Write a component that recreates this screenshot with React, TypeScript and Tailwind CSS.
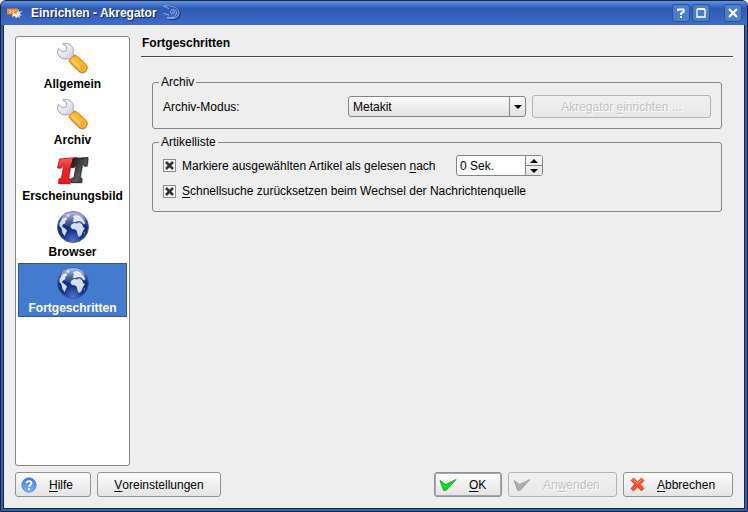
import { useState, type ReactNode } from "react";

function Wrench() {
  return (
    <svg viewBox="0 0 32 32" className="h-8 w-8" aria-hidden="true">
      <defs>
        <linearGradient id="wr-steel" x1="0" y1="0" x2="1" y2="1">
          <stop offset="0" stopColor="#ffffff" />
          <stop offset="0.5" stopColor="#e6e8f0" />
          <stop offset="1" stopColor="#b8bccb" />
        </linearGradient>
        <linearGradient id="wr-grip" x1="0" y1="1" x2="1" y2="0">
          <stop offset="0" stopColor="#f59300" />
          <stop offset="0.5" stopColor="#ffbb33" />
          <stop offset="1" stopColor="#f79d0c" />
        </linearGradient>
      </defs>
      <path d="M13 20L22 29.500q5 3 8-1l.5-4L19 13z" fill="#000" opacity="0.2" />
      <path
        d="M5.800 .8L9.600 3.400L9.200 7.600L6 8.800L1.200 5.400C0 8.800.8 12.800 4.200 14.800C6.800 16.400 9.400 16.200 11.400 15.400L13.800 17.800L18.500 13.600L16 10.800C17.200 7.200 16 3.600 12.800 1.600C10.600.2 8 .1 5.800 .8Z"
        fill="url(#wr-steel)"
        stroke="#9397ab"
        strokeWidth="0.900"
        strokeLinejoin="round"
      />
      <path
        d="M12 18.600C12 16 16.500 12 19 12.400L28.800 21.200C31 23.600 30.400 26.800 28.200 28.400C26.200 29.900 23.400 29.800 21.600 28Z"
        fill="url(#wr-grip)"
        stroke="#c97300"
        strokeWidth="1"
        strokeLinejoin="round"
      />
      <path d="M15.500 17.600L23 24.800" stroke="#ffd777" strokeWidth="1.800" />
      <circle cx="25.500" cy="24.800" r="1.400" fill="#ffe6ad" stroke="#c87600" strokeWidth="0.700" />
    </svg>
  );
}

function Letters() {
  return (
    <svg viewBox="0 0 32 32" className="h-8 w-8" aria-hidden="true">
      <defs>
        <linearGradient id="tt-red" x1="0" y1="0" x2="0" y2="1">
          <stop offset="0" stopColor="#ff6464" />
          <stop offset="0.4" stopColor="#f02424" />
          <stop offset="1" stopColor="#f01818" />
        </linearGradient>
        <linearGradient id="tt-dark" x1="0" y1="0" x2="1" y2="1">
          <stop offset="0" stopColor="#111" />
          <stop offset="0.6" stopColor="#5a5a5a" />
          <stop offset="1" stopColor="#111" />
        </linearGradient>
      </defs>
      <g strokeLinejoin="round">
        <path d="M2.500 4L20 2.500L19 11H15.500L15 8.500H14L11.500 23L13.500 24L13 28.500H1.500L2 24L4.500 23L7 9H6L4 13H.5Z" transform="translate(1 1)" fill="#777" opacity="0.45" />
        <path d="M2.500 4L20 2.500L19 11H15.500L15 8.500H14L11.500 23L13.500 24L13 28.500H1.500L2 24L4.500 23L7 9H6L4 13H.5Z" fill="url(#tt-red)" stroke="#b40a0a" strokeWidth="0.800" />
        <path d="M16 3.500L31 2.500L30 11H27L26.500 8.500H25.500L23 22.500L25 23.500L24.500 27.500H14L14.500 23.500L17 22.500L19.500 8.500H18.500L17 12.500H14Z" transform="translate(1 1)" fill="#666" opacity="0.45" />
        <path d="M16 3.500L31 2.500L30 11H27L26.500 8.500H25.500L23 22.500L25 23.500L24.500 27.500H14L14.500 23.500L17 22.500L19.500 8.500H18.500L17 12.500H14Z" fill="url(#tt-dark)" stroke="#1a1a1a" strokeWidth="0.800" />
      </g>
    </svg>
  );
}

function Globe() {
  return (
    <svg viewBox="0 0 32 32" className="h-8 w-8" aria-hidden="true">
      <defs>
        <radialGradient id="gl-sea" cx="0.5" cy="0.95" r="0.95">
          <stop offset="0" stopColor="#5276cc" />
          <stop offset="0.35" stopColor="#16358a" />
          <stop offset="0.65" stopColor="#102c7c" />
          <stop offset="1" stopColor="#6680be" />
        </radialGradient>
        <linearGradient id="gl-shine" x1="0" y1="0" x2="0" y2="1">
          <stop offset="0" stopColor="#fff" stopOpacity="0.5" />
          <stop offset="1" stopColor="#fff" stopOpacity="0.1" />
        </linearGradient>
      </defs>
      <circle cx="16" cy="16" r="15.500" fill="url(#gl-sea)" stroke="#3c57a0" strokeWidth="0.800" />
      <g fill="#d3dcf0">
        <path d="M2.500 12L5 8L8.500 6L10.500 8L8 10L8.500 12L6 13.500L5 15.500L7.500 17L10 19.500L9 22L7.500 25L5.500 22L4.500 17.500L2.500 15Z" />
        <path d="M14 14L17 12L20 12.500L22 11.500L25 13L26.500 16.500L28 17L26 20L24.500 24L22 26L20.500 23.500L20 20.500L18.500 18.500L15 18L13.500 16Z" />
        <path d="M15.500 10.500L17 8L16 5.500L19 4L23 5L26 8.500L28.500 12L27 13.500L24.500 10.500L21 10L18 11Z" />
        <path d="M9.500 4L12.500 3L12 5.500L10 6Z" />
        <path d="M27 22L28 20.500L27.500 23.500Z" />
      </g>
      <ellipse cx="16" cy="8.500" rx="12" ry="7.500" fill="url(#gl-shine)" />
    </svg>
  );
}

function Tick({ muted = false }: { muted?: boolean }) {
  return (
    <svg viewBox="0 0 18 14" className="h-[14px] w-[18px] shrink-0" aria-hidden="true">
      <path
        d="M1 2.500L4 4.500L6.500 6.500L17 1.500L7 12.500L4.500 12.200Z"
        fill={muted ? "#adadad" : "#10dc20"}
        stroke={muted ? "#9f9f9f" : "#0a9a14"}
        strokeWidth="0.800"
        strokeLinejoin="round"
      />
    </svg>
  );
}

function Cross() {
  return (
    <svg viewBox="0 0 15 15" className="h-[15px] w-[15px] shrink-0" aria-hidden="true">
      <path
        d="M3.500 1L7.500 4.800L11.500 1L14 3.500L10.200 7.300L14 11.500L11.500 14L7.500 10L3.500 14L1 11.500L4.800 7.300L1 3.500Z"
        fill="#f5532c"
        stroke="#d8381a"
        strokeWidth="0.800"
        strokeLinejoin="round"
      />
      <path d="M3.500 2.500L7.500 6.400L11.500 2.500" fill="none" stroke="#ff9c7c" strokeWidth="1" />
    </svg>
  );
}

function HelpIcon() {
  return (
    <svg viewBox="0 0 16 16" className="h-4 w-4 shrink-0" aria-hidden="true">
      <defs>
        <linearGradient id="help-ball" x1="0" y1="0" x2="0" y2="1">
          <stop offset="0" stopColor="#3f76ea" />
          <stop offset="1" stopColor="#7fb0ff" />
        </linearGradient>
      </defs>
      <circle cx="8" cy="8" r="7.200" fill="url(#help-ball)" stroke="#3d6ed6" strokeWidth="0.700" />
      <path d="M5.500 6.300C5.500 3.300 10.500 3.300 10.500 6.200C10.500 8 8 8 8 10" fill="none" stroke="#fff" strokeWidth="1.800" />
      <circle cx="8" cy="12.200" r="1.100" fill="#fff" />
    </svg>
  );
}

function AppIcon() {
  return (
    <svg viewBox="0 0 16 12" className="h-3 w-4" aria-hidden="true">
      <path d="M0 1.500H11V7.500H0Z" fill="#f58a2a" />
      <path d="M2 3.500H3.500V5.500H2M5 3.500H6.500V5.500H5M8 3.500H9" fill="none" stroke="#fbd0a0" strokeWidth="0.900" />
      <path d="M6 6L9 7L12 2L11.500 5L15.500 4L12.500 6.500L15 8.500L12 8.500L13 11L10.500 9.500L9 11.500L8 9L5 10Z" fill="#f7ead8" />
    </svg>
  );
}

function Swirl() {
  return (
    <svg viewBox="0 0 18 16" className="h-4 w-[18px]" fill="none" strokeLinecap="round" aria-hidden="true">
      <path d="M4 1.500C9 .5 17 2 17 8.500C17 14.500 11 15.500 6 14" stroke="#1c3672" strokeWidth="1.200" />
      <path
        d="M1 1C6 .2 16 1.200 16 7.500C16 13.500 9 14.500 4 12.500C9 13.500 13.500 11.500 13.500 7.500C13.500 4 8 3.500 7.500 6.800C7.200 9.600 11.500 9.800 11.500 7.200C11.500 6 9.600 5.800 9.500 7.200M1 1L5.500 3.500M.8 8.500L6 10"
        stroke="#9db6e6"
        strokeWidth="0.900"
      />
    </svg>
  );
}

function TitleButton({ label, children }: { label: string; children: ReactNode }) {
  return (
    <button
      type="button"
      aria-label={label}
      className="flex h-[18px] w-[18px] items-center justify-center rounded-[3px] border border-[#2c539f] bg-linear-to-b from-[#4a7fd6] to-[#4c7dc4]"
    >
      {children}
    </button>
  );
}

function PushButton({
  className,
  disabled,
  children,
}: {
  className: string;
  disabled?: boolean;
  children: ReactNode;
}) {
  return (
    <button
      type="button"
      disabled={disabled}
      className={`flex items-center rounded-[3px] border border-[#929292] bg-linear-to-b from-[#fcfcfc] to-[#e4e4e4] whitespace-nowrap disabled:border-[#b4b4b4] disabled:from-[#f0f0f0] disabled:to-[#e8e8e8] disabled:text-[#c2c2c2] disabled:[text-shadow:1px_1px_0_#fff] ${className}`}
    >
      {children}
    </button>
  );
}

function Key({ children }: { children: string }) {
  return <u className="underline decoration-1 underline-offset-2">{children}</u>;
}

function CheckBox({
  id,
  checked,
  onChange,
}: {
  id: string;
  checked: boolean;
  onChange: (value: boolean) => void;
}) {
  return (
    <span className="grid h-[13px] w-[13px] shrink-0">
      <input
        id={id}
        type="checkbox"
        checked={checked}
        onChange={(e) => onChange(e.target.checked)}
        className="col-start-1 row-start-1 h-[13px] w-[13px] appearance-none border border-[#8c8c8c] bg-[#f7f7f7]"
      />
      {checked && (
        <svg viewBox="0 0 13 13" className="pointer-events-none col-start-1 row-start-1 h-[13px] w-[13px]" aria-hidden="true">
          <path d="M3 3L10 10M10 3L3 10" stroke="#333" strokeWidth="2.600" />
        </svg>
      )}
    </span>
  );
}

const pages = [
  { name: "Allgemein", icon: <Wrench /> },
  { name: "Archiv", icon: <Wrench /> },
  { name: "Erscheinungsbild", icon: <Letters /> },
  { name: "Browser", icon: <Globe /> },
  { name: "Fortgeschritten", icon: <Globe /> },
];

export default function App() {
  const [page, setPage] = useState("Fortgeschritten");
  const [markRead, setMarkRead] = useState(true);
  const [resetSearch, setResetSearch] = useState(true);
  const [seconds, setSeconds] = useState(0);

  return (
    <div className="bg-white font-['Liberation_Sans',Arial,sans-serif] text-[12px] leading-4 text-black">
      <div className="flex min-h-screen flex-col rounded-t-[6px] border border-[#20242e] bg-[#2f62bd]">
        <header className="flex h-6 shrink-0 items-center rounded-t-[5px] bg-linear-to-b from-[#5f93e6] via-[#2f59b4] via-30% to-[#3e6cc6] pr-[5px] pl-1.5">
          <AppIcon />
          <h1 className="ml-2 font-bold text-white [text-shadow:1px_1px_1px_#10245a]">Einrichten - Akregator</h1>
          <span className="ml-1.5">
            <Swirl />
          </span>
          <div className="ml-auto flex gap-[2px]">
            <TitleButton label="Hilfe">
              <svg viewBox="0 0 10 10" className="h-[10px] w-[10px]" fill="none" stroke="#fff" strokeWidth="2" aria-hidden="true">
                <path d="M2 3V1.500H7.500V4L5 5.500V7M5 8V10" />
              </svg>
            </TitleButton>
            <TitleButton label="Maximieren">
              <svg viewBox="0 0 10 10" className="h-[10px] w-[10px]" fill="none" stroke="#fff" aria-hidden="true">
                <path d="M1 1H9" strokeWidth="2" />
                <path d="M1 1V9H9V1" strokeWidth="1.400" />
              </svg>
            </TitleButton>
            <span className="ml-3">
              <TitleButton label="Schließen">
                <svg viewBox="0 0 10 10" className="h-[10px] w-[10px]" stroke="#fff" strokeWidth="2.200" aria-hidden="true">
                  <path d="M1 1L9 9M9 1L1 9" />
                </svg>
              </TitleButton>
            </span>
          </div>
        </header>

        <div className="mx-[2px] mb-[2px] flex grow flex-col border-x border-b border-[#20242e] bg-[#eee] px-[11px] pt-[11px] pb-[11px]">
          <div className="flex grow gap-[11px]">
            <nav className="flex w-[115px] shrink-0 flex-col gap-[2px] rounded-[3px] border border-[#858585] bg-white p-[2px]">
              {pages.map((p) => (
                <button
                  key={p.name}
                  type="button"
                  onClick={() => setPage(p.name)}
                  aria-pressed={page === p.name}
                  className="flex h-[54px] flex-col items-center gap-px border border-transparent pt-[3px] font-bold whitespace-nowrap aria-pressed:border-[#2d5796] aria-pressed:bg-[#437ccf] aria-pressed:text-white"
                >
                  {p.icon}
                  <span>{p.name}</span>
                </button>
              ))}
            </nav>

            <main className="-mt-px min-w-0 grow">
              <h2 className="h-[22px] border-b border-[#4c4c4c] font-bold shadow-[0_1px_0_#fff]">
                <span className="block pl-px">Fortgeschritten</span>
              </h2>

              <div className="mt-[17px] mr-[11px] ml-[11px]">
                <fieldset className="rounded-[3px] border border-[#858585] px-[10px] pb-[10px]">
                  <legend className="-ml-1 px-[2px]">Archiv</legend>
                  <div className="flex items-center pt-[5px]">
                    <label htmlFor="mode" className="w-[185px] shrink-0">
                      Archiv-Modus:
                    </label>
                    <div className="grid w-[178px] shrink-0 grid-cols-[1fr_17px]">
                      <select
                        id="mode"
                        className="col-span-2 col-start-1 row-start-1 h-[21px] appearance-none rounded-[3px] border border-[#858585] bg-linear-to-b from-[#fafafa] to-[#e2e2e2] pl-1"
                      >
                        <option>Metakit</option>
                      </select>
                      <span className="pointer-events-none col-start-2 row-start-1 flex items-center justify-center border-l border-[#858585]">
                        <svg viewBox="0 0 8 4" className="h-1 w-2" aria-hidden="true">
                          <path d="M0 0H8L4 4Z" />
                        </svg>
                      </span>
                    </div>
                    <PushButton disabled className="ml-1.5 h-[23px] grow justify-center">
                      Akregator&nbsp;<Key>e</Key>inrichten ...
                    </PushButton>
                  </div>
                </fieldset>

                <fieldset className="mt-[5px] rounded-[3px] border border-[#858585] px-[10px] pb-3">
                  <legend className="-ml-1 px-[2px]">Artikelliste</legend>
                  <div className="flex items-center pt-[5px]">
                    <CheckBox id="mark" checked={markRead} onChange={setMarkRead} />
                    <label htmlFor="mark" className="ml-1.5 w-[274px] shrink-0">
                      Markiere ausgewählten Artikel als gelesen <Key>n</Key>ach
                    </label>
                    <div className="flex h-[21px] w-[87px] overflow-hidden rounded-[3px] border border-[#858585] bg-white">
                      <input
                        type="text"
                        role="spinbutton"
                        aria-label="Sekunden"
                        aria-valuenow={seconds}
                        readOnly
                        value={`${seconds} Sek.`}
                        className="w-0 min-w-0 grow bg-transparent pl-[3px] outline-none"
                      />
                      <div className="flex w-[17px] flex-col border-l border-[#858585] bg-linear-to-b from-[#fafafa] to-[#e6e6e6]">
                        <button
                          type="button"
                          aria-label="Mehr"
                          onClick={() => setSeconds(seconds + 1)}
                          className="flex grow items-center justify-center border-b border-[#858585]"
                        >
                          <svg viewBox="0 0 8 4" className="h-1 w-2" aria-hidden="true">
                            <path d="M0 4H8L4 0Z" />
                          </svg>
                        </button>
                        <button
                          type="button"
                          aria-label="Weniger"
                          onClick={() => setSeconds(Math.max(0, seconds - 1))}
                          className="flex grow items-center justify-center"
                        >
                          <svg viewBox="0 0 8 4" className="h-1 w-2" aria-hidden="true">
                            <path d="M0 0H8L4 4Z" />
                          </svg>
                        </button>
                      </div>
                    </div>
                  </div>
                  <div className="mt-[7px] flex items-center">
                    <CheckBox id="reset" checked={resetSearch} onChange={setResetSearch} />
                    <label htmlFor="reset" className="ml-1.5">
                      <Key>S</Key>chnellsuche zurücksetzen beim Wechsel der Nachrichtenquelle
                    </label>
                  </div>
                </fieldset>
              </div>
            </main>
          </div>

          <footer className="mt-1.5 flex gap-1.5">
            <PushButton className="h-[25px] w-[76px] gap-3 pl-[5px]">
              <HelpIcon />
              <span>
                <Key>H</Key>ilfe
              </span>
            </PushButton>
            <PushButton className="h-[25px] w-[124px] justify-center">
              <Key>V</Key>oreinstellungen
            </PushButton>
            <PushButton className="ml-auto h-[25px] w-[68px] gap-3 pl-1 shadow-[inset_0_0_0_1px_#a8a8a8]">
              <Tick />
              <span>
                <Key>O</Key>K
              </span>
            </PushButton>
            <PushButton disabled className="h-[25px] w-[109px] gap-3 pl-1">
              <Tick muted />
              <span>
                An<Key>w</Key>enden
              </span>
            </PushButton>
            <PushButton className="h-[25px] w-[110px] gap-3 pl-1.5">
              <Cross />
              <span>
                <Key>A</Key>bbrechen
              </span>
            </PushButton>
          </footer>
        </div>
      </div>
    </div>
  );
}
